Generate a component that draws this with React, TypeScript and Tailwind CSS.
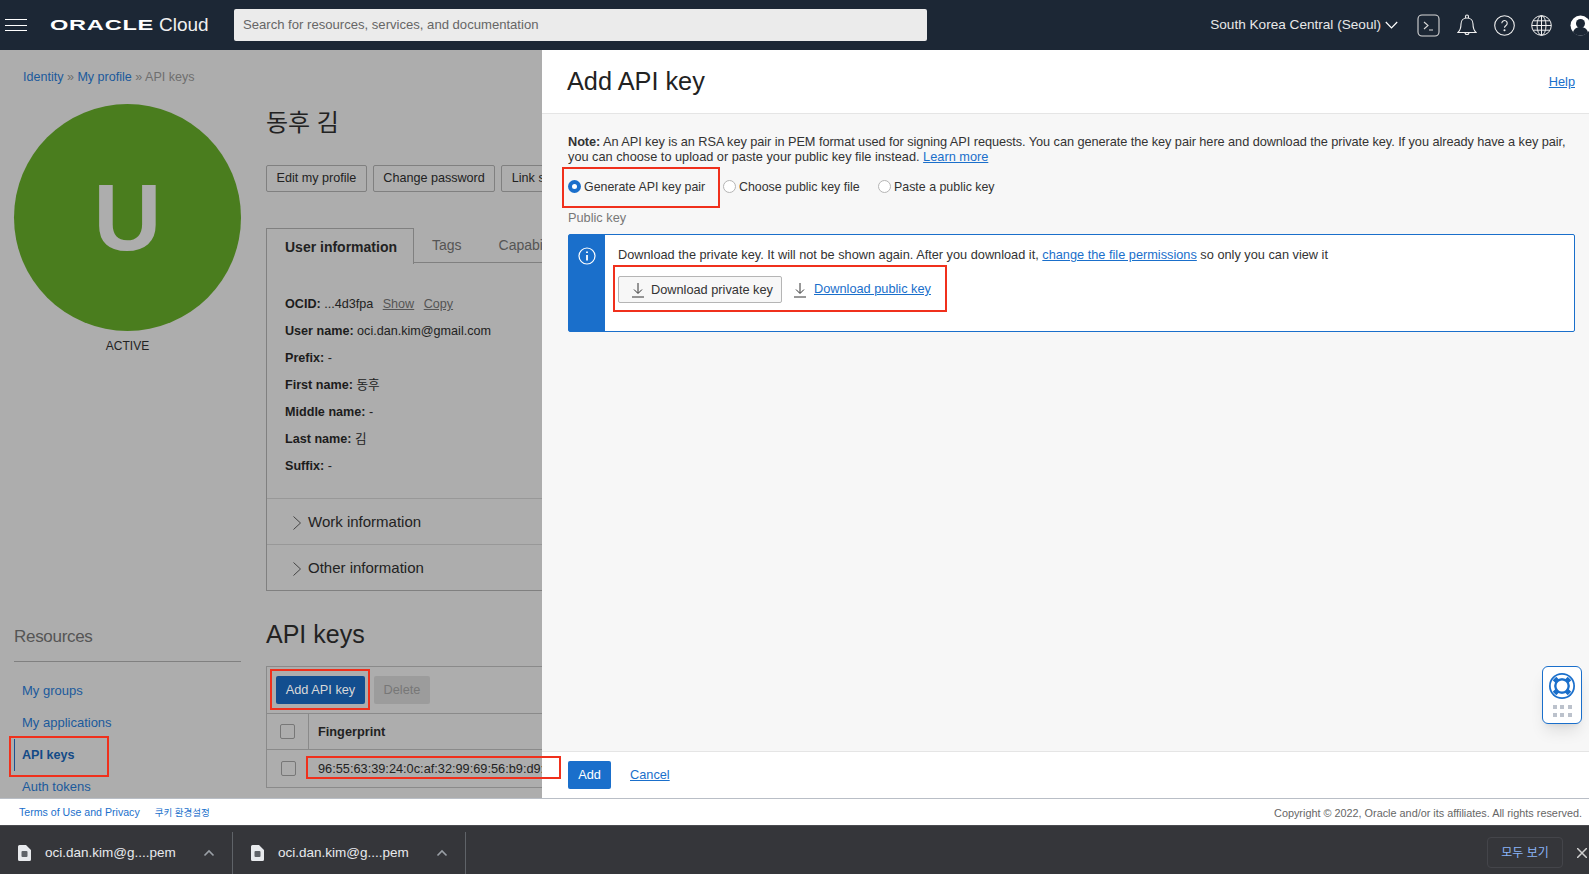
const font = { fontFamily: '"Liberation Sans", "Noto Sans CJK KR", sans-serif' };

function DownloadIcon() {
  return (
    <svg width="14" height="16" viewBox="0 0 14 16" fill="none" stroke="#333" strokeWidth="1">
      <path d="M7 1v10M3 7.500l4 4 4-4M1 15h12" />
    </svg>
  );
}

function Chevron() {
  return (
    <svg width="10" height="16" viewBox="0 0 10 16" fill="none" stroke="#444" strokeWidth="1">
      <path d="M1.500 1.500 8.500 8l-7 6.500" />
    </svg>
  );
}

function PemIcon() {
  return (
    <svg width="13" height="16" viewBox="0 0 13 16">
      <path d="M1.500 0H8l5 5v9.500a1.500 1.500 0 0 1-1.500 1.500h-10A1.500 1.500 0 0 1 0 14.500v-13A1.500 1.500 0 0 1 1.500 0z" fill="#e8eaed" />
      <rect x="3.500" y="6" width="6" height="6" rx="1" fill="#5f6368" />
    </svg>
  );
}

function Caret() {
  return (
    <svg width="12" height="8" viewBox="0 0 12 8" fill="none" stroke="#9aa0a6" strokeWidth="1.6">
      <path d="M1.500 6.500 6 2l4.500 4.500" />
    </svg>
  );
}

function Header() {
  return (
    <header className="h-[50px] shrink-0 bg-[#1c2735] flex items-center text-[#f0f0f0]">
      <div className="w-[22px] ml-[5px] flex flex-col gap-[4.5px]">
        <div className="h-px bg-white" />
        <div className="h-px bg-white" />
        <div className="h-px bg-white" />
      </div>
      <div className="ml-[23px] w-[109px] flex items-center">
        <span className="text-[15.5px] font-bold tracking-[0.5px] text-white origin-left scale-x-[1.52] inline-block">ORACLE</span>
      </div>
      <span className="text-[19px] w-[75px] text-[#f0f0f0]">Cloud</span>
      <div className="w-[693px] h-[32px] bg-[#ebebeb] rounded-[2px] flex items-center pl-[9px] text-[13.1px] text-[#666]">
        Search for resources, services, and documentation
      </div>
      <div className="ml-auto flex items-center">
        <span className="text-[13.6px] text-[#e8e8e8]">South Korea Central (Seoul)</span>
        <svg className="ml-[4px]" width="13" height="8" viewBox="0 0 13 8" fill="none" stroke="#fff" strokeWidth="1.2">
          <path d="M.8 1 6.500 7 12.200 1" />
        </svg>
        <svg className="ml-[19px]" width="23" height="23" viewBox="0 0 23 23" fill="none" stroke="#d8d8d8" strokeWidth="1.1">
          <rect x="1" y="1" width="21" height="21" rx="4" />
          <path d="M7 8l4 3.500L7 15M12 16h4" />
        </svg>
        <svg className="ml-[17px]" width="20" height="23" viewBox="0 0 20 23" fill="none" stroke="#f0f0f0" strokeWidth="1.1">
          <path d="M1 18.500h18c-2.500-2.500-3-5-3-8.500 0-3.500-2.500-6-6-6s-6 2.500-6 6c0 3.500-.5 6-3 8.500z" />
          <path d="M8.500 4V2.500a1.500 1.500 0 0 1 3 0V4M8 18.500a2 2 0 0 0 4 0" />
        </svg>
        <svg className="ml-[17px]" width="21" height="21" viewBox="0 0 21 21" fill="none" stroke="#f0f0f0" strokeWidth="1.1">
          <circle cx="10.500" cy="10.500" r="9.800" />
          <path d="M7.800 8.200a2.700 2.700 0 1 1 4.200 2.300c-1 .7-1.500 1.200-1.500 2.300" />
          <circle cx="10.500" cy="15.300" r=".5" fill="#f0f0f0" />
        </svg>
        <svg className="ml-[16px]" width="21" height="21" viewBox="0 0 21 21" fill="none" stroke="#f0f0f0" strokeWidth="1">
          <circle cx="10.500" cy="10.500" r="9.800" />
          <ellipse cx="10.500" cy="10.500" rx="4.500" ry="9.800" />
          <path d="M10.500.7v19.600M.7 10.500h19.600M2 5.800h17M2 15.200h17" />
        </svg>
        <div className="ml-[18px] w-[19px] overflow-hidden">
          <svg className="block" width="21" height="21" viewBox="0 0 21 21">
            <circle cx="10.500" cy="10.500" r="10" fill="#fff" />
            <circle cx="10.500" cy="8.500" r="4.500" fill="#1c2735" />
            <path d="M3 17.500c1-4 4-5.500 7.500-5.500s6.500 1.500 7.500 5.500c-2 2-4.500 3-7.500 3s-5.500-1-7.500-3z" fill="#1c2735" />
          </svg>
        </div>
      </div>
    </header>
  );
}

function Sidebar() {
  return (
    <aside className="w-[266px] shrink-0 pl-[14px]">
      <div className="pl-[9px] pt-[19px] text-[12.55px] leading-[16px] text-[#6f6f6f]">
        <span className="text-[#1b5a9c]">Identity</span> » <span className="text-[#1b5a9c]">My profile</span> » API keys
      </div>
      <div className="mt-[19px] w-[227px] h-[227px] rounded-full bg-[#4a7d1e] flex items-center justify-center text-[94px] font-bold text-[#adadad]">U</div>
      <div className="w-[227px] mt-[7px] text-center text-[12px] leading-[16px] text-[#222]">ACTIVE</div>
      <div className="w-[227px] mt-[272px] pb-[13px] border-b border-[#808080] text-[17px] tracking-[-0.3px] leading-[22px] font-light text-[#555]">Resources</div>
      <ul className="mt-[13px] text-[13px] leading-[32px] text-[#1b5a9c]">
        <li className="h-[32px] pl-[8px]">My groups</li>
        <li className="h-[32px] pl-[8px]">My applications</li>
        <li className="relative h-[32px] border-l border-[#1b4f8f] pl-[7px] text-[12.6px] font-bold text-[#134a87]">
          API keys
          <div className="absolute left-[-6px] top-[-3px] w-[100px] h-[41px] border-2 border-[#f0301c]" />
        </li>
        <li className="h-[32px] pl-[8px]">Auth tokens</li>
      </ul>
    </aside>
  );
}

function InfoRow({ label, children }: { label: string; children?: React.ReactNode }) {
  return (
    <div className="h-[27px] leading-[27px]">
      <b className="text-[#1c1c1c]">{label}</b> {children}
    </div>
  );
}

function UserInfo() {
  return (
    <div className="flex-1 min-w-0">
      <div className="pt-[56px] text-[24px] leading-[34px] font-normal text-[#222]">동후 김</div>
      <div className="mt-[25px] flex gap-[6px] text-[12.6px] text-[#222]">
        {["Edit my profile", "Change password", "Link social account"].map((b) => (
          <div key={b} className="h-[27px] px-[9.500px] border border-[#808080] rounded-[2px] leading-[25px] whitespace-nowrap">{b}</div>
        ))}
      </div>
      <div className="mt-[36px] flex h-[35px] whitespace-nowrap">
        <div className="w-[148px] h-[36px] border border-b-0 border-[#808080] pl-[18px] text-[14px] leading-[36px] font-bold text-[#222] bg-[#adadad] z-10">User information</div>
        <div className="flex-1 border-b border-[#808080] text-[14px] text-[#555] leading-[35px]">
          <span className="ml-[18px]">Tags</span>
          <span className="ml-[37px]">Capabilities</span>
        </div>
      </div>
      <div className="border border-t-0 border-[#808080] h-[328px] text-[12.6px] text-[#222]">
        <div className="pt-[28px] pl-[18px] h-[235px]">
          <InfoRow label="OCID:">
            ...4d3fpa <span className="ml-[6px] underline text-[#555]">Show</span> <span className="ml-[6px] underline text-[#555]">Copy</span>
          </InfoRow>
          <InfoRow label="User name:">oci.dan.kim@gmail.com</InfoRow>
          <InfoRow label="Prefix:">-</InfoRow>
          <InfoRow label="First name:">동후</InfoRow>
          <InfoRow label="Middle name:">-</InfoRow>
          <InfoRow label="Last name:">김</InfoRow>
          <InfoRow label="Suffix:">-</InfoRow>
        </div>
        {["Work information", "Other information"].map((t) => (
          <div key={t} className="h-[46px] pt-[2px] border-t border-[#989898] flex items-center pl-[25px] gap-[6px] text-[15px] text-[#222]">
            <Chevron />
            {t}
          </div>
        ))}
      </div>
      <div className="mt-[25px] text-[25px] leading-[36px] text-[#222]">API keys</div>
      <div className="mt-[14px] border border-r-0 border-[#8a8a8a] text-[12.75px]">
        <div className="h-[47px] pl-[9px] pt-[9px] flex gap-[9px] border-b border-[#8a8a8a]">
          <div className="relative w-[89px] h-[28px] bg-[#134e8f] rounded-[2px] text-[#d8d8d8] leading-[28px] text-center">
            Add API key
            <div className="absolute left-[-6px] top-[-7px] w-[100px] h-[41px] border-2 border-[#f0301c]" />
          </div>
          <div className="w-[56px] h-[28px] bg-[#9c9c9c] rounded-[2px] text-[#777] leading-[28px] text-center">Delete</div>
        </div>
        <div className="h-[36px] flex border-b border-[#8a8a8a]">
          <div className="w-[42px] flex items-center justify-center border-r border-[#8a8a8a]">
            <div className="w-[15px] h-[15px] border border-[#777] rounded-[2px]" />
          </div>
          <div className="pl-[9px] leading-[35px] font-bold text-[#222]">Fingerprint</div>
        </div>
        <div className="h-[37px] flex">
          <div className="w-[42px] flex items-center justify-center">
            <div className="w-[15px] h-[15px] border border-[#777] rounded-[2px]" />
          </div>
          <div className="relative pl-[9px] leading-[37px] text-[#222] whitespace-nowrap">
            96:55:63:39:24:0c:af:32:99:69:56:b9:d9:
          </div>
        </div>
      </div>
    </div>
  );
}

function Radio({ label, on, className }: { label: string; on?: boolean; className: string }) {
  return (
    <label className={`flex items-center gap-[3px] whitespace-nowrap text-[12.4px] ${className}`}>
      {on ? (
        <span className="w-[13px] h-[13px] rounded-full bg-[#1a6fcb] flex items-center justify-center">
          <span className="w-[5px] h-[5px] rounded-full bg-white" />
        </span>
      ) : (
        <span className="w-[13px] h-[13px] rounded-full border border-[#b5b5b5] bg-white" />
      )}
      {label}
    </label>
  );
}

function ApiKeyPanel() {
  return (
    <div className="absolute left-[542px] right-0 top-0 bottom-0 bg-[#f7f7f7] flex flex-col text-[12.75px] text-[#333]">
      <div className="h-[64px] shrink-0 bg-white border-b border-[#e5e5e5] flex items-center justify-between pl-[25px] pr-[14px]">
        <h1 className="text-[25.3px] text-[#222]">Add API key</h1>
        <span className="underline text-[#1a6fcb]">Help</span>
      </div>
      <div className="flex-1 pl-[26px] pr-[14px] pt-[20px]">
        <p className="leading-[15px] whitespace-nowrap">
          <span className="tracking-[-0.065px]">
            <b>Note:</b> An API key is an RSA key pair in PEM format used for signing API requests. You can generate the key pair here and download the private key. If you already have a key pair,
          </span>
          <br />
          you can choose to upload or paste your public key file instead. <span className="underline text-[#1a6fcb]">Learn more</span>
        </p>
        <div className="relative flex mt-[13px] h-[20px] items-center">
          <Radio label="Generate API key pair" on className="w-[155px]" />
          <Radio label="Choose public key file" className="w-[155px]" />
          <Radio label="Paste a public key" className="" />
          <div className="absolute left-[-6px] top-[-10px] w-[158px] h-[41px] border-2 border-[#f0301c]" />
        </div>
        <div className="mt-[13px] leading-[16px] text-[#777]">Public key</div>
        <div className="mt-[8px] h-[98px] flex bg-white border border-[#1a6fcb] rounded-[2px]">
          <div className="w-[36px] bg-[#1a6fcb] flex justify-center pt-[12px]">
            <svg width="18" height="18" viewBox="0 0 18 18" fill="none" stroke="#fff" strokeWidth="1.2">
              <circle cx="9" cy="9" r="8" />
              <path d="M9 8v5.500M9 4.500v1.500" strokeWidth="1.8" />
            </svg>
          </div>
          <div className="pl-[13px] pt-[12px]">
            <div className="leading-[16px]">
              Download the private key. It will not be shown again. After you download it, <span className="underline text-[#1a6fcb]">change the file permissions</span> so only you can view it
            </div>
            <div className="relative mt-[13px] flex items-center w-[330px]">
              <div className="h-[27px] w-[164px] flex items-center pl-[12px] gap-[6px] bg-[#f7f7f7] border border-[#b5b5b5] rounded-[2px] whitespace-nowrap">
                <DownloadIcon />
                Download private key
              </div>
              <div className="ml-[11px] flex items-center gap-[7px] whitespace-nowrap">
                <DownloadIcon />
                <span className="underline text-[#1a6fcb] -mt-[1px]">Download public key</span>
              </div>
              <div className="absolute left-[-5px] top-[-11px] w-[334px] h-[47px] border-2 border-[#f0301c]" />
            </div>
          </div>
        </div>
      </div>
      <div className="h-[47px] shrink-0 bg-white border-t border-[#e5e5e5] flex items-center pl-[26px]">
        <div className="w-[43px] h-[28px] rounded-[2px] bg-[#1a6fcb] text-white leading-[28px] text-center">Add</div>
        <span className="ml-[19px] underline text-[#1a6fcb]">Cancel</span>
      </div>
      <div className="absolute right-[7px] top-[616px] w-[40px] h-[58px] bg-white border border-[#1a6fcb] rounded-[6px] shadow-lg flex flex-col items-center pt-[5px]">
        <svg width="28" height="28" viewBox="0 0 28 28" fill="none">
          <circle cx="14" cy="14" r="13" fill="#1a6fcb" />
          <circle cx="14" cy="14" r="9.500" stroke="#fff" strokeWidth="3.500" />
          <path d="M6.500 6.500l5 5M21.500 6.500l-5 5M6.500 21.500l5-5M21.500 21.500l-5-5" stroke="#1a6fcb" strokeWidth="5" />
          <circle cx="14" cy="14" r="6.500" fill="#fff" stroke="#1a6fcb" strokeWidth="2" />
        </svg>
        <div className="mt-[5px] grid grid-cols-3 gap-[3.500px]">
          {[0, 1, 2, 3, 4, 5].map((i) => (
            <div key={i} className="w-[4px] h-[4px] bg-[#bcc2cc]" />
          ))}
        </div>
      </div>
    </div>
  );
}

function DownloadChip() {
  return (
    <div className="w-[233px] h-[42px] flex items-center pl-[18px] border-r border-[#5f6368]">
      <PemIcon />
      <span className="ml-[14px] w-[131px] text-[13.5px] text-[#e8eaed] whitespace-nowrap">oci.dan.kim@g....pem</span>
      <span className="ml-[27px] flex"><Caret /></span>
    </div>
  );
}

export default function App() {
  return (
    <div className="h-screen flex flex-col overflow-hidden bg-white" style={font}>
      <Header />
      <main className="relative flex-1 min-h-0 overflow-hidden bg-[#adadad]">
        <div className="flex h-[900px]">
          <Sidebar />
          <UserInfo />
        </div>
        <ApiKeyPanel />
        {/* fingerprint marker runs across the edge of the panel */}
        <div className="absolute left-[306px] top-[706px] w-[255px] h-[23px] border-2 border-[#f0301c]" />
      </main>
      <footer className="h-[27px] shrink-0 bg-white border-t border-[#b9bec6] flex items-center justify-between pl-[19px] pr-[7px] pt-[2px] text-[10.6px]">
        <div className="flex items-center gap-[15px] text-[#1a6fcb]">
          <span>Terms of Use and Privacy</span>
          <span className="text-[9.5px]">쿠키 환경설정</span>
        </div>
        <span className="text-[10.85px] text-[#666]">Copyright © 2022, Oracle and/or its affiliates. All rights reserved.</span>
      </footer>
      <div className="h-[49px] shrink-0 bg-[#35363a] flex items-end border-t border-[#4a4b4f]">
        <DownloadChip />
        <DownloadChip />
        <div className="ml-auto flex items-center pb-[6px]">
          <div className="w-[76px] h-[31px] border border-[#44454a] rounded-[4px] text-center leading-[31px] text-[12px] text-[#8ab4f8]">모두 보기</div>
          <svg className="ml-[14px] mr-[2px]" width="10" height="10" viewBox="0 0 10 10" stroke="#d0d0d0" strokeWidth="1.5">
            <path d="M0 0l10 10M10 0L0 10" />
          </svg>
        </div>
      </div>
    </div>
  );
}
